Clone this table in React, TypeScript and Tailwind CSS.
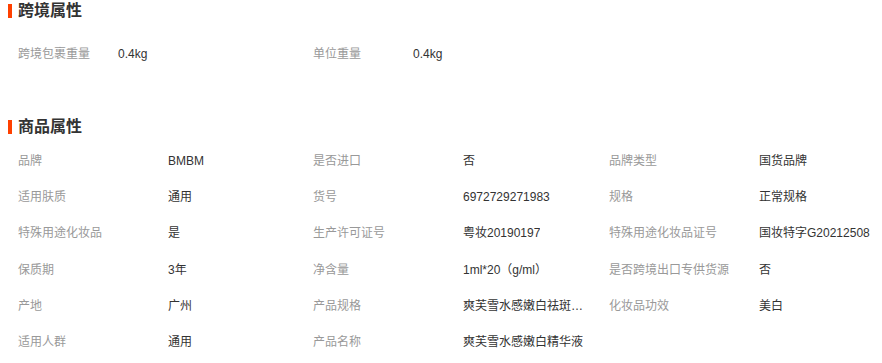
const cjk = "font-['Liberation_Sans','Noto_Sans_CJK_SC',sans-serif]"

const crossBorder = [
  { label: '跨境包裹重量', value: '0.4kg' },
  { label: '单位重量', value: '0.4kg' },
]

const goods = [
  { label: '品牌', value: 'BMBM' },
  { label: '是否进口', value: '否' },
  { label: '品牌类型', value: '国货品牌' },
  { label: '适用肤质', value: '通用' },
  { label: '货号', value: '6972729271983' },
  { label: '规格', value: '正常规格' },
  { label: '特殊用途化妆品', value: '是' },
  { label: '生产许可证号', value: '粤妆20190197' },
  { label: '特殊用途化妆品证号', value: '国妆特字G20212508' },
  { label: '保质期', value: '3年' },
  { label: '净含量', value: '1ml*20（g/ml）' },
  { label: '是否跨境出口专供货源', value: '否' },
  { label: '产地', value: '广州' },
  { label: '产品规格', value: '爽芙雪水感嫩白祛斑精华液' },
  { label: '化妆品功效', value: '美白' },
  { label: '适用人群', value: '通用' },
  { label: '产品名称', value: '爽芙雪水感嫩白精华液' },
]

function SectionTitle({ title }: { title: string }) {
  return (
    <div className="flex items-center h-[22px]">
      <span className="ml-[8px] mr-[6px] w-[4px] h-[14px] bg-[#ff4000]" />
      <h2 className="text-[16px] font-bold text-[#333] leading-[22px]">{title}</h2>
    </div>
  )
}

export default function App() {
  return (
    <div className={`w-[882px] h-[363px] bg-white overflow-hidden ${cjk}`}>
      {/* 跨境属性 */}
      <SectionTitle title="跨境属性" />
      <div className="mt-[14px] pl-[18px] grid grid-cols-[295px_295px_295px]">
        {crossBorder.map((item) => (
          <div key={item.label} className="flex h-[36px] items-center text-[12px]">
            <span className="w-[100px] text-[#999]">{item.label}</span>
            <span className="text-[#333]">{item.value}</span>
          </div>
        ))}
      </div>

      {/* 商品属性 */}
      <div className="mt-[44px]">
        <SectionTitle title="商品属性" />
      </div>
      <div className="mt-[5px] pl-[18px] grid grid-cols-[295px_296px_280px]">
        {goods.map((item) => (
          <div key={item.label} className="flex h-[36.2px] items-center text-[12px]">
            <span className="w-[150px] shrink-0 text-[#999]">{item.label}</span>
            <span className="max-w-[122px] truncate text-[#333]">{item.value}</span>
          </div>
        ))}
      </div>
    </div>
  )
}
